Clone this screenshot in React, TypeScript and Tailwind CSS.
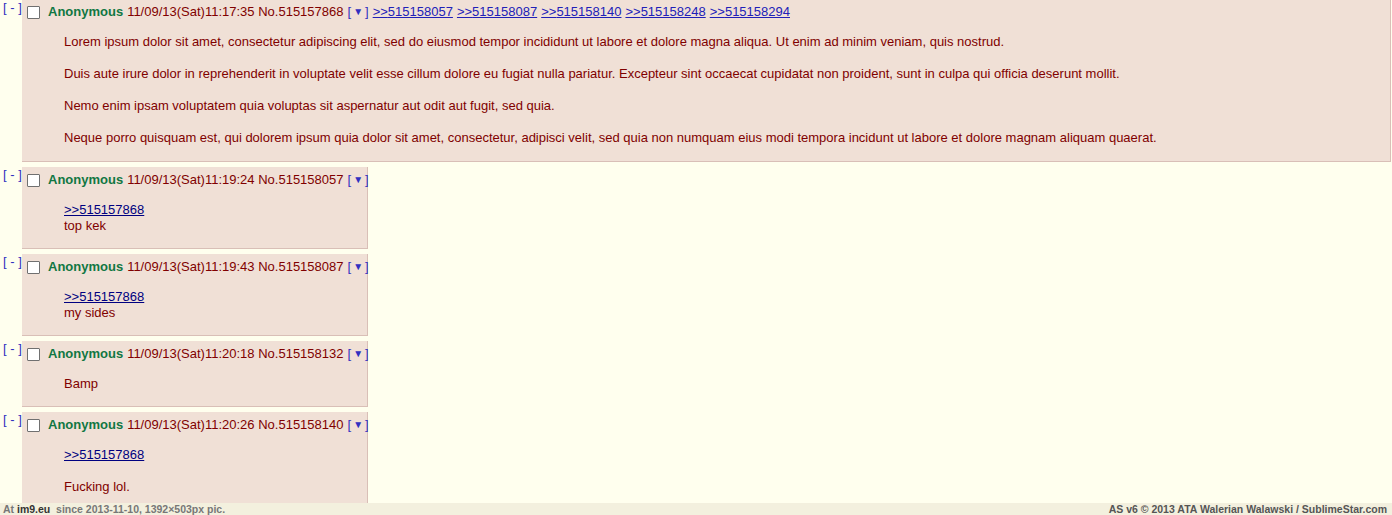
const replies = [
  { time: "11/09/13(Sat)11:19:24", no: "515158057", quote: true, gap: false, text: "top kek" },
  { time: "11/09/13(Sat)11:19:43", no: "515158087", quote: true, gap: false, text: "my sides" },
  { time: "11/09/13(Sat)11:20:18", no: "515158132", quote: false, gap: false, text: "Bamp" },
  { time: "11/09/13(Sat)11:20:26", no: "515158140", quote: true, gap: true, text: "Fucking lol." },
];

const backlinks = ["515158057", "515158087", "515158140", "515158248", "515158294"];

// body of the opening post is swapped for neutral filler text
const opLines = [
  "Lorem ipsum dolor sit amet, consectetur adipiscing elit, sed do eiusmod tempor incididunt ut labore et dolore magna aliqua. Ut enim ad minim veniam, quis nostrud.",
  "Duis aute irure dolor in reprehenderit in voluptate velit esse cillum dolore eu fugiat nulla pariatur. Excepteur sint occaecat cupidatat non proident, sunt in culpa qui officia deserunt mollit.",
  "Nemo enim ipsam voluptatem quia voluptas sit aspernatur aut odit aut fugit, sed quia.",
  "Neque porro quisquam est, qui dolorem ipsum quia dolor sit amet, consectetur, adipisci velit, sed quia non numquam eius modi tempora incidunt ut labore et dolore magnam aliquam quaerat.",
];

function Header({ time, no, links }: { time: string; no: string; links?: string[] }) {
  return (
    <div className="flex items-center h-[18px] whitespace-nowrap">
      <span className="ml-[5px] w-[13px] h-[13px] border border-[#707070] bg-white rounded-[1px] shrink-0" />
      <span className="ml-[8px] font-bold text-[#117743]">Anonymous</span>
      <span className="ml-[4px] text-[#800000]">
        {time} No.{no}
      </span>
      <span className="ml-[4px] text-[#3030c0]">
        [<span className="inline-block text-[10px] align-[1px] px-[2px]">▼</span>]
      </span>
      {links?.map((l) => (
        <a key={l} className="ml-[4px] text-[#2020b8] underline">
          &gt;&gt;{l}
        </a>
      ))}
    </div>
  );
}

function Side() {
  return <div className="w-[22px] shrink-0 pl-[3px] text-[#3030c0] leading-[16px]">[ - ]</div>;
}

export default function App() {
  return (
    <div className="w-[1392px] h-[515px] bg-[#ffffee] text-[13px] font-['Liberation_Sans',Arial,sans-serif] overflow-hidden">
      <div className="h-[503px] overflow-hidden flex flex-col gap-[5px]">
        <div className="flex">
          <Side />
          <div className="flex-1 mr-[1px] bg-[#f0e0d6] border-r border-b border-[#d9bfb7] pt-[3px] pb-[2px]">
            <Header time="11/09/13(Sat)11:17:35" no="515157868" links={backlinks} />
            <div className="mx-[42px] my-[13px] text-[#800000] leading-[16px]">
              {opLines.map((line, i) => (
                <p key={i} className={i > 0 ? "mt-[16px]" : ""}>
                  {line}
                </p>
              ))}
            </div>
          </div>
        </div>

        {replies.map((r) => (
          <div key={r.no} className="flex">
            <Side />
            <div className="w-[346px] bg-[#f0e0d6] border-r border-b border-[#d9bfb7] pt-[4px] pb-[1px]">
              <Header time={r.time} no={r.no} />
              <div className="mx-[42px] my-[13px] text-[#800000] leading-[16px]">
                {r.quote && (
                  <a className="block text-[#000080] underline">&gt;&gt;515157868</a>
                )}
                {r.gap && <div className="h-[16px]" />}
                <div>{r.text}</div>
              </div>
            </div>
          </div>
        ))}
      </div>

      <div className="h-[12px] bg-[#f3f0de] flex items-center justify-between px-[3px] text-[10.5px] font-bold text-[#777] leading-[12px]">
        <span>
          At <span className="text-[#333]">im9.eu</span>&nbsp; since 2013-11-10, 1392×503px pic.
        </span>
        <span className="text-[#555] pr-[2px]">AS v6 © 2013 ATA Walerian Walawski / SublimeStar.com</span>
      </div>
    </div>
  );
}
